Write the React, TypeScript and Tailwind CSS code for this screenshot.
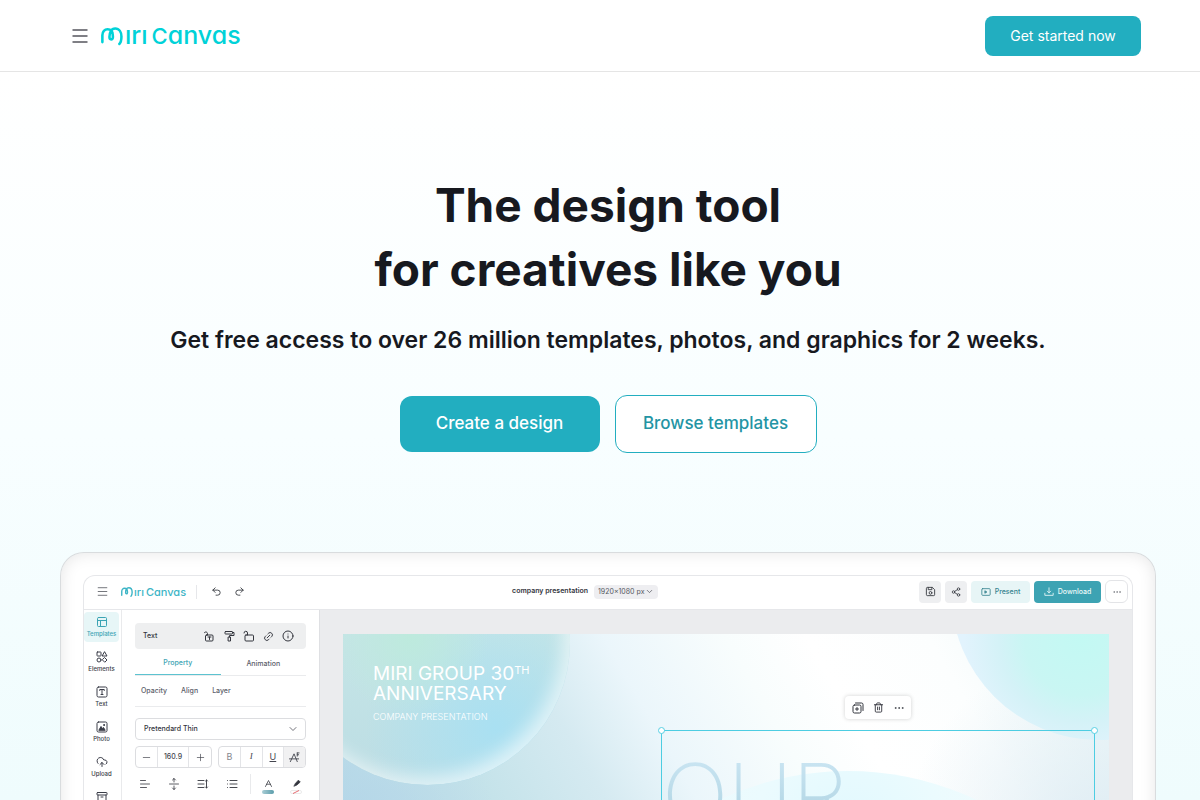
import React from 'react';
import { Undo2, Redo2, CloudUpload, Archive, Share2, ChevronDown, Minus, Plus, Link2, Info, Trash2, PanelsTopLeft, Ellipsis, Menu } from 'lucide-react';
import clsx from 'clsx';

interface IconProps {
  size?: number;
  className?: string;
  children: React.ReactNode;
}

const Icon: React.FC<IconProps> = ({ size = 12, className, children }) => (
  <svg
    width={size}
    height={size}
    viewBox="0 0 24 24"
    fill="none"
    stroke="currentColor"
    strokeWidth="2"
    strokeLinecap="round"
    strokeLinejoin="round"
    className={clsx('shrink-0', className)}
    aria-hidden="true"
  >
    {children}
  </svg>
);

const Logo: React.FC<{ small?: boolean }> = ({ small }) => (
  <span
    aria-label="miricanvas"
    className={clsx(
      "flex items-center font-medium [font-feature-settings:'cv11']",
      small ? 'h-4 text-[11px] leading-4 text-[#3db5c6]' : 'h-6 text-[25px] leading-6 text-[#00d2d8]'
    )}
  >
    <svg viewBox="0 0 24 20" fill="none" stroke="currentColor" strokeWidth="2.8" strokeLinecap="round" className={small ? 'mt-px w-3' : 'mt-0.5 w-[22px]'} aria-hidden="true">
      <path d="M1.5 16.500V9C1.500 5 4 2.500 7.200 2.500C10.500 2.500 12.600 5 12.800 8.500L13 11C13 14.500 9.200 14.200 9.200 11C9.200 6 11 1.600 15.500 1.600C20 1.600 22.300 6 22.300 10.500C22.300 14.500 21.800 17 20 18.500" />
    </svg>
    <span className={small ? 'ml-px' : 'ml-0.5'}>
      ırı<span className={small ? 'ml-0.5 text-[11px]' : 'ml-1 text-[22px]'}>C</span>anvas
    </span>
  </span>
);

const SIDE_ITEMS = [
  { label: 'Templates', icon: <PanelsTopLeft size={12} /> },
  {
    label: 'Elements',
    icon: (
      <Icon>
        <rect x="2" y="2" width="8" height="8" rx="1" />
        <path d="M17.500 2L22 10H13Z" />
        <circle cx="6" cy="18" r="4" />
        <path d="M17.500 13.500L22 18L17.500 22.500L13 18Z" />
      </Icon>
    ),
  },
  {
    label: 'Text',
    icon: (
      <Icon>
        <rect x="2" y="2" width="20" height="20" rx="3" />
        <path d="M7.500 9V7H16.500V9M12 7V17M10 17H14" />
      </Icon>
    ),
  },
  {
    label: 'Photo',
    icon: (
      <Icon>
        <rect x="2" y="2" width="20" height="20" rx="3" />
        <path d="M6 18L10 11L13 15L15 13L18 18Z" fill="currentColor" />
        <circle cx="16" cy="8" r="1" fill="currentColor" />
      </Icon>
    ),
  },
  { label: 'Upload', icon: <CloudUpload size={12} /> },
  { label: 'Brand', icon: <Archive size={12} /> },
];

const EditorHeader = () => (
  <div className="flex h-[34px] items-center justify-between border-b border-[#e6e7ea] pr-1 pb-0.5 pl-3">
    <div className="flex items-center pr-1.5">
      <button aria-label="Menu" className="text-[#55585f]"><Menu size={13} strokeWidth={1.5} /></button>
      <span className="ml-3"><Logo small /></span>
      <span className="mx-2.5 h-3.5 w-px bg-[#e6e7ea]" />
      <button aria-label="Undo" className="ml-1 text-[#3a3d44]"><Undo2 size={11} /></button>
      <button aria-label="Redo" className="ml-3 text-[#3a3d44]"><Redo2 size={11} /></button>
    </div>
    <div className="flex items-center gap-1.5">
      <span className="text-[7px] font-semibold text-[#33353d]">company presentation</span>
      <span className="grid items-center rounded bg-[#eeeef1] text-[7px] text-[#55585f]">
        <select aria-label="Page size" className="col-start-1 row-start-1 h-3.5 w-16 appearance-none bg-transparent pl-1 leading-3">
          <option>1920×1080 px</option>
        </select>
        <ChevronDown size={9} className="pointer-events-none col-start-1 row-start-1 mr-1 justify-self-end" />
      </span>
    </div>
    <div className="flex items-center gap-1 text-[7px] font-medium">
      <button aria-label="Save" className="flex size-[22px] items-center justify-center rounded bg-[#eeeff1] text-[#3a3d44]">
        <Icon size={11}>
          <path d="M3 5a2 2 0 0 1 2-2h11l5 5v11a2 2 0 0 1-2 2H5a2 2 0 0 1-2-2Z" />
          <path d="M7 3v5h8V3" />
          <circle cx="12" cy="15" r="3" />
        </Icon>
      </button>
      <button aria-label="Share" className="flex size-[22px] items-center justify-center rounded bg-[#eeeff1] text-[#3a3d44]"><Share2 size={10} /></button>
      <button className="flex h-[22px] w-[59px] items-center justify-center gap-1 rounded bg-[#e7f5f6] leading-[10px] text-[#35838f]">
        <Icon size={10}>
          <rect x="2" y="4" width="20" height="16" rx="2" />
          <path d="M10 9.500L14 12L10 14.500Z" fill="currentColor" />
        </Icon>
        Present
      </button>
      <button className="flex h-[22px] w-[67px] items-center justify-center gap-1 rounded bg-[#3da3b3] leading-[10px] text-[#eefafa]">
        <Icon size={10}>
          <path d="M12 2v12M8 10l4 4 4-4M2 15v5h20v-5" />
        </Icon>
        Download
      </button>
      <button aria-label="More" className="flex size-[23px] items-center justify-center rounded-md border border-[#e3e4e7] text-[#6a6d74]"><Ellipsis size={10} strokeWidth={1.5} /></button>
    </div>
  </div>
);

const SideNav = () => (
  <nav className="flex w-[38px] shrink-0 flex-col gap-[5px] border-r border-[#e9eaec] pt-[2px] pr-[2px]">
    {SIDE_ITEMS.map((item, idx) => (
      <button
        key={item.label}
        className={clsx(
          'flex h-[30px] flex-col items-center justify-center gap-0.5 rounded text-[6px] leading-2 font-medium',
          idx === 0 ? 'bg-[#e7f6f7] text-[#3ba4b4]' : 'text-[#3a3d48]'
        )}
      >
        {item.icon}
        {item.label}
      </button>
    ))}
  </nav>
);

const PropertyPanel = () => (
  <div className="w-[198px] shrink-0 border-r border-[#dfe0e3] px-[13px] pt-[13px] text-[#33353d]">
    <div className="flex h-[26px] items-center justify-between rounded bg-[#eeeff0] px-2">
      <span className="text-[7px] font-medium">Text</span>
      <div className="flex items-center gap-2 pr-1">
        <button aria-label="Lock text">
          <Icon>
            <rect x="5" y="10" width="15" height="12" rx="2" />
            <path d="M9 10V7a3.500 3.500 0 0 0-6-2M10 14h6M13 14v5" />
          </Icon>
        </button>
        <button aria-label="Copy style">
          <Icon>
            <rect x="4" y="3" width="15" height="5" rx="1" />
            <path d="M19 5h3v6h-9v3M11 14h4v8h-4Z" />
          </Icon>
        </button>
        <button aria-label="Unlock">
          <Icon>
            <rect x="4" y="10" width="17" height="12" rx="2" />
            <path d="M9 10V6a3.500 3.500 0 0 0-7 0" />
          </Icon>
        </button>
        <button aria-label="Link"><Link2 size={11} className="-rotate-45" /></button>
        <button aria-label="Info"><Info size={12} /></button>
      </div>
    </div>
    <div className="mt-1 flex h-[23px] border-b border-[#eaebed] text-[7px] font-medium">
      <button className="flex-1 border-b border-[#5cc3d0] text-[#3ba4b4]">Property</button>
      <button className="flex-1 text-[#5b5e6a]">Animation</button>
    </div>
    <div className="flex h-[31px] items-center gap-3.5 border-b border-[#eaebed] px-1.5 text-[7px] font-medium text-[#5b5e6a]">
      <button>Opacity</button>
      <button>Align</button>
      <button>Layer</button>
    </div>
    <div className="mt-[11px] grid items-center rounded border border-[#dcdde0]">
      <select aria-label="Font" className="col-start-1 row-start-1 h-[20px] w-full appearance-none bg-transparent pl-2 text-[7px] font-medium">
        <option>Pretendard Thin</option>
      </select>
      <ChevronDown size={12} strokeWidth={1.5} className="pointer-events-none col-start-1 row-start-1 mr-1.5 justify-self-end text-[#44464f]" />
    </div>
    <div className="mt-1.5 flex h-[22px] justify-between text-[#44464f]">
      <div className="flex w-[77px] divide-x divide-[#e3e4e7] rounded border border-[#dcdde0]">
        <button aria-label="Decrease size" className="flex w-[22px] shrink-0 items-center justify-center"><Minus size={11} strokeWidth={1.5} /></button>
        <input aria-label="Font size" defaultValue="160.9" className="w-0 min-w-0 flex-1 text-center text-[7px] font-medium" />
        <button aria-label="Increase size" className="flex w-[22px] shrink-0 items-center justify-center"><Plus size={11} strokeWidth={1.5} /></button>
      </div>
      <div className="flex w-[88px] divide-x divide-[#e3e4e7] overflow-hidden rounded border border-[#dcdde0] text-[9px]">
        <button className="flex-1 text-[#85878d]">B</button>
        <button className="flex-1 font-['Liberation_Serif'] italic">I</button>
        <button className="flex-1 underline">U</button>
        <button aria-label="Text effects" className="flex flex-1 items-center justify-center bg-[#f1f1f2]">
          <Icon size={11}>
            <path d="M3 21L11 4L18 21M1 15h20M18 2h4M18 2v7M18 6h3" />
          </Icon>
        </button>
      </div>
    </div>
    <div className="mt-1.5 flex items-center justify-between px-1 text-[#33353d]">
      <div className="flex gap-[17px]">
        <button aria-label="Align left"><Icon><path d="M3 5h10M3 12h18M3 19h12" strokeWidth="1.6" /></Icon></button>
        <button aria-label="Vertical align"><Icon><path d="M3 12h18M12 1v7M9 4l3-3 3 3M12 23v-7M9 20l3 3 3-3" strokeWidth="1.6" /></Icon></button>
        <button aria-label="Line spacing"><Icon><path d="M2 5h12M2 12h12M2 19h12M19 4v16M17 6l2-2 2 2M17 18l2 2 2-2" strokeWidth="1.8" /></Icon></button>
        <button aria-label="List"><Icon><path d="M8 5h14M8 12h14M8 19h14M3 5h.1M3 12h.1M3 19h.1" strokeWidth="1.8" /></Icon></button>
      </div>
      <span className="h-5 w-px bg-[#e9eaec]" />
      <div className="flex gap-4">
        <button aria-label="Text color" className="flex flex-col items-center gap-0.5 pt-1">
          <Icon size={9}><path d="M4 20L12 4L20 20M7 14h10" /></Icon>
          <span className="h-1 w-3 rounded-full bg-linear-to-r from-[#a9cdd5] to-[#5a9dab]" />
        </button>
        <button aria-label="Highlight color" className="flex flex-col items-center gap-0.5 pt-1">
          <Icon size={9}><path d="M9 12L17 3L22 8L13 16L6 19Z" fill="currentColor" /></Icon>
          <svg viewBox="0 0 12 4" className="h-1 w-3" aria-hidden="true">
            <rect x="0.500" y="0.500" width="11" height="3" rx="1.500" fill="#fff" stroke="#ddd" strokeWidth="0.600" />
            <path d="M3 3.500L9 0.500" stroke="#e2464f" strokeWidth="0.800" />
          </svg>
        </button>
      </div>
    </div>
  </div>
);

const Slide = () => (
  <div className="relative aspect-video w-full overflow-hidden bg-[radial-gradient(circle_at_0%_50%,#b3d5e9_0%,transparent_20%),radial-gradient(circle_at_100%_50%,#dcebf3_0%,transparent_26%),linear-gradient(60deg,#b7d9e5_10%,#c5e3ea_30%,#d5eaf1_41%,#ebf6fb_50%,#f8fdfd_62%,#ffffff_70%,#fcfefe_82%,#eaf6f6_100%)]">
    {/* Decorative spheres */}
    <div className="absolute -top-[134px] -left-[58px] size-[285px] rounded-full bg-[radial-gradient(circle_at_44%_48%,#bdeadd_0%,transparent_36%),radial-gradient(circle_at_74%_80%,#a9e0f2_0%,transparent_42%),linear-gradient(#cdece8,#bcdde4)] shadow-[inset_-6px_-8px_18px_rgba(255,255,255,0.6)]" />
    <div className="absolute -top-[190px] -right-[138px] size-[296px] rounded-full bg-[radial-gradient(circle_at_44%_66%,#c3f9f3_0%,#c9f6f3_22%,#d4f2f7_32%,#e2f3fd_46%)]" />
    <div className="absolute top-[137px] left-[205px] size-[600px] rounded-full bg-[radial-gradient(circle_at_50%_12%,#dff8fe_0%,#ebfbfe_16%,transparent_40%)]" />

    <div className="absolute top-[30px] left-[30px] text-white">
      <p className="text-[19px] leading-[20px]">
        MIRI GROUP 30<sup className="-top-1.5 text-[11px]">TH</sup>
      </p>
      <p className="text-[19px] leading-[20px]">ANNIVERSARY</p>
      <p className="mt-[7px] text-[9px] leading-3 font-light">COMPANY PRESENTATION</p>
    </div>

    {/* Selected text box */}
    <div className="absolute top-[96px] right-[14px] h-[240px] w-[434px] border border-[#4dcde2]">
      <span className="absolute -top-1 -left-1 size-[7px] rounded-full border border-[#58d0e4] bg-white" />
      <span className="absolute -top-1 -right-1 size-[7px] rounded-full border border-[#58d0e4] bg-white" />
      <p className="mt-4 bg-linear-to-b from-[#cfe8f5] to-[#a5cedd] bg-clip-text text-[88px] leading-[96px] font-extralight text-transparent">OUR</p>
    </div>
    <div className="absolute top-[62px] right-[198px] flex h-[23px] w-[66px] items-center justify-around rounded bg-white px-0.5 text-[#33353d] shadow-[0_0_4px_rgba(0,0,0,0.18)]">
      <button aria-label="Duplicate">
        <Icon>
          <rect x="2" y="6" width="16" height="16" rx="3" />
          <path d="M7 2h12a3 3 0 0 1 3 3v12M10 11v6M7 14h6" />
        </Icon>
      </button>
      <button aria-label="Delete"><Trash2 size={11} /></button>
      <button aria-label="More"><Ellipsis size={12} strokeWidth={1.5} /></button>
    </div>
  </div>
);

export default function App() {
  return (
    <div className="flex h-screen flex-col overflow-hidden bg-white font-['Inter',sans-serif] text-[#17191f]">
      <header className="flex h-[72px] shrink-0 items-center justify-between border-b border-[#e5e5e5] pr-[59px] pl-[71px]">
        <div className="flex items-center gap-3">
          <button aria-label="Open menu" className="text-[#55555e]">
            <Icon size={18}><path d="M2 4h20M2 12h20M2 20h20" strokeLinecap="butt" /></Icon>
          </button>
          <a href="#"><Logo /></a>
        </div>
        <button className="h-10 w-[156px] rounded-lg bg-[#22aec0] text-sm text-white">Get started now</button>
      </header>

      <main className="min-h-0 flex-1 overflow-hidden bg-linear-to-b from-white via-[#f8feff] to-[#effcfd] pr-11 pl-[60px]">
        <section className="flex flex-col items-center pt-[101px] text-center">
          <h1 className="text-[46px] leading-[64px] font-bold">
            The design tool
            <br />
            for creatives like you
          </h1>
          <p className="mt-[21px] text-[23px] leading-9 font-semibold">Get free access to over 26 million templates, photos, and graphics for 2 weeks.</p>
          <div className="mt-[37px] flex items-center gap-[15px] text-[17px] font-medium">
            <button className="h-14 w-[200px] rounded-xl bg-[#22aec0] text-white">Create a design</button>
            <button className="h-[58px] w-[202px] rounded-xl border border-[#22aec0] bg-white text-[#2394a4]">Browse templates</button>
          </div>
        </section>

        <section className="mt-[99px] rounded-t-3xl border border-b-0 border-[#d9dcde] bg-white px-[22px] pt-[22px] shadow-[inset_0_0_16px_rgba(0,0,0,0.10)]">
          <div className="overflow-hidden rounded-t-xl border border-b-0 border-[#e6e7ea] bg-white">
            <EditorHeader />
            <div className="flex">
              <SideNav />
              <PropertyPanel />
              <div className="min-w-0 flex-1 bg-[#ebecee] px-[23px] pt-[24px] pb-6">
                <Slide />
              </div>
            </div>
          </div>
        </section>
      </main>
    </div>
  );
}
